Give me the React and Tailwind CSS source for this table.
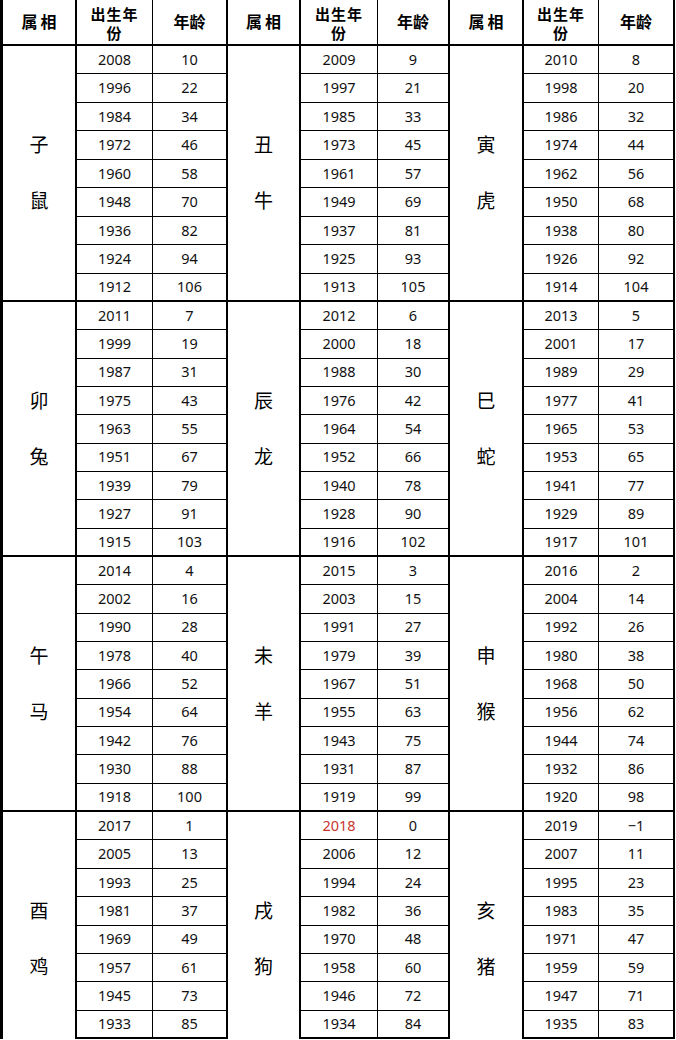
import React from 'react';

const GROUPS = [
  { rows: 9, h: 'h-[256px]', signs: [['子', '鼠', 2008], ['丑', '牛', 2009], ['寅', '虎', 2010]] },
  { rows: 9, h: 'h-[255px]', signs: [['卯', '兔', 2011], ['辰', '龙', 2012], ['巳', '蛇', 2013]] },
  { rows: 9, h: 'h-[255px]', signs: [['午', '马', 2014], ['未', '羊', 2015], ['申', '猴', 2016]] },
  { rows: 8, h: 'h-[227px]', signs: [['酉', '鸡', 2017], ['戌', '狗', 2018], ['亥', '猪', 2019]], open: true },
];

const COLS = 'grid grid-cols-[74px_76px_75px_73px_77px_72px_74px_75px_76px]';
const ZODIAC_START = ['col-start-1', 'col-start-4', 'col-start-7'];

const fmtAge = (n) => (n < 0 ? `−${-n}` : String(n));

const HeaderCell = ({ children, thick }) => (
  <div
    className={`flex items-center justify-center text-center border-b-2 border-black font-bold text-[15px] leading-[19px] text-black ${
      thick ? 'border-r-2' : 'border-r'
    }`}
  >
    {children}
  </div>
);

const Header = () => {
  const block = (key) => [
    <HeaderCell key={key + 'a'} thick>
      <span className="tracking-[3px] pl-[3px] text-[16px]">属相</span>
    </HeaderCell>,
    <HeaderCell key={key + 'b'}>
      <span className="tracking-[1px] flex flex-col items-center pt-[4px]">
        <span>出生年</span>
        <span>份</span>
      </span>
    </HeaderCell>,
    <HeaderCell key={key + 'c'} thick>
      <span className="text-[16px]">年龄</span>
    </HeaderCell>,
  ];
  return <div className={`${COLS} h-[46px]`}>{[...block('1'), ...block('2'), ...block('3')]}</div>;
};

const Group = ({ group }) => {
  const { rows, h, signs, open } = group;
  const rowClass = rows === 9 ? 'grid-rows-[repeat(9,minmax(0,1fr))]' : 'grid-rows-[repeat(8,minmax(0,1fr))]';
  const spanClass = rows === 9 ? 'row-span-9' : 'row-span-8';

  const cells = [];
  for (let r = 0; r < rows; r++) {
    const last = r === rows - 1;
    signs.forEach(([, , start], i) => {
      const year = start - 12 * r;
      const age = 2018 - year;
      cells.push(
        <div
          key={`y${r}-${i}`}
          className={`flex items-center justify-center border-r border-black ${last ? 'border-b-2' : 'border-b'} ${
            year === 2018 ? 'text-[#c8352c]' : 'text-[#111]'
          }`}
        >
          {year}
        </div>,
        <div
          key={`a${r}-${i}`}
          className={`flex items-center justify-center border-r-2 border-black text-[#111] ${last ? 'border-b-2' : 'border-b'}`}
        >
          {fmtAge(age)}
        </div>
      );
    });
  }

  return (
    <div className={`${COLS} ${rowClass} ${h} text-[14.5px]`}>
      {signs.map(([a, b], i) => (
        <div
          key={a}
          className={`${ZODIAC_START[i]} row-start-1 ${spanClass} border-r-2 border-black ${open ? '' : 'border-b-2'} flex flex-col items-center pt-[85px] text-[19px] text-black`}
        >
          <span className="h-[28px] flex items-center">{a}</span>
          <span className="h-[28px]" />
          <span className="h-[28px] flex items-center">{b}</span>
        </div>
      ))}
      {cells}
    </div>
  );
};

export default function App() {
  return (
    <div className="w-[676px] h-[1040px] overflow-hidden bg-white">
      <div className="border-l-[3px] border-black font-['Noto_Sans','Noto_Sans_CJK_SC',sans-serif] w-[675px]">
        <Header />
        {GROUPS.map((g, i) => (
          <Group key={i} group={g} />
        ))}
      </div>
    </div>
  );
}
